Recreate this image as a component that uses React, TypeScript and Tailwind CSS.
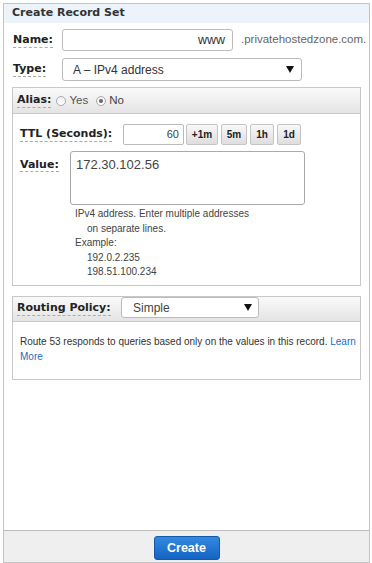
import React from "react";

const lbl = "font-['DejaVu_Sans',sans-serif] font-bold text-[11px] text-[#222] border-b border-dashed border-[#aaa] leading-[14px]";

function Arrow() {
  return (
    <svg width="8" height="7" viewBox="0 0 8 7" className="shrink-0">
      <path d="M0 0 H8 L4 7 Z" fill="#111" />
    </svg>
  );
}

function Radio({ checked }: { checked?: boolean }) {
  return (
    <span className="w-[10px] h-[10px] rounded-full border border-[#aaa] bg-gradient-to-b from-[#f0f0f0] to-white flex items-center justify-center shrink-0">
      {checked && <span className="w-[4px] h-[4px] rounded-full bg-[#666]" />}
    </span>
  );
}

function SmallBtn({ children, w }: { children: React.ReactNode; w: string }) {
  return (
    <div className={`${w} h-[21px] border border-[#c4c4c4] rounded-[2px] bg-gradient-to-b from-[#f8f8f8] to-[#dedede] flex items-center justify-center text-[10px] font-bold text-[#222]`}>
      {children}
    </div>
  );
}

export default function App() {
  return (
    <div className="bg-white pl-[3px] pr-[2px] pt-[3px] font-['Liberation_Sans',Arial,sans-serif]">
      <div className="w-[367px] h-[560px] border border-[#c4c4c4] flex flex-col">
        <div className="h-[19px] bg-[#edf3fb] pl-[8px] flex items-center font-['DejaVu_Sans',sans-serif] font-bold text-[11px] text-[#333]">
          Create Record Set
        </div>
        <div className="pl-[8px]">
          <div className="flex items-center mt-[6px] h-[22px]">
            <div className="w-[50px] pl-[1px] flex items-center leading-none"><span className={lbl}>Name:</span></div>
            <div className="w-[171px] h-[22px] border border-[#bbb] rounded-[3px] flex items-center justify-end pr-[7px] text-[12.5px] text-[#333]">www</div>
            <span className="ml-[8px] text-[11.5px] leading-none text-[#666]">.privatehostedzone.com.</span>
          </div>
          <div className="flex items-center mt-[7px] h-[23px]">
            <div className="w-[50px] pl-[1px] flex items-center leading-none"><span className={lbl}>Type:</span></div>
            <div className="w-[240px] h-[23px] border border-[#bbb] rounded-[3px] flex items-center pl-[10px] pr-[7px] text-[12px] text-[#333]">
              <span className="flex-1">A – IPv4 address</span>
              <Arrow />
            </div>
          </div>

          <div className="mt-[6px] w-[349px] border border-[#c8c8c8]">
            <div className="h-[26px] bg-gradient-to-b from-[#fafafa] to-[#e4e4e4] border-b border-[#c8c8c8] flex items-center pl-[4px] text-[11.5px] leading-none text-[#444]">
              <span className={lbl}>Alias:</span>
              <span className="ml-[5px]"><Radio /></span>
              <span className="ml-[3px] text-[#555]">Yes</span>
              <span className="ml-[8px]"><Radio checked /></span>
              <span className="ml-[3px]">No</span>
            </div>
            <div className="pl-[7px] pt-[10px] pb-[5px]">
              <div className="flex items-center h-[21px]">
                <div className="w-[103px] flex items-center leading-none"><span className={lbl}>TTL (Seconds):</span></div>
                <div className="w-[61px] h-[21px] border border-[#bbb] rounded-[2px] flex items-center justify-end pr-[4px] text-[11px] text-[#444]">60</div>
                <div className="flex gap-[3px] ml-[2px]">
                  <SmallBtn w="w-[32px]">+1m</SmallBtn>
                  <SmallBtn w="w-[26px]">5m</SmallBtn>
                  <SmallBtn w="w-[24px]">1h</SmallBtn>
                  <SmallBtn w="w-[24px]">1d</SmallBtn>
                </div>
              </div>
              <div className="flex mt-[6px]">
                <div className="w-[50px] pt-[4px] leading-none"><span className={lbl}>Value:</span></div>
                <div className="w-[235px] h-[54px] border border-[#aaa] rounded-[3px] pl-[5px] pt-[3px] text-[13px] text-[#444]">172.30.102.56</div>
              </div>
              <div className="pl-[55px] mt-[2px] text-[10px] leading-[14.6px] text-[#444]">
                <div>IPv4 address. Enter multiple addresses</div>
                <div className="pl-[12px]">on separate lines.</div>
                <div>Example:</div>
                <div className="pl-[12px]">192.0.2.235</div>
                <div className="pl-[12px]">198.51.100.234</div>
              </div>
            </div>
          </div>

          <div className="mt-[10px] w-[349px] border border-[#c8c8c8]">
            <div className="h-[25px] bg-gradient-to-b from-[#fafafa] to-[#e4e4e4] border-b border-[#c8c8c8] flex items-center pl-[4px]">
              <div className="w-[104px] flex items-center leading-none"><span className={lbl}>Routing Policy:</span></div>
              <div className="w-[138px] h-[21px] -mt-[2px] border border-[#bbb] rounded-[3px] bg-white flex items-center pl-[11px] pr-[6px] text-[12px] text-[#444]">
                <span className="flex-1">Simple</span>
                <Arrow />
              </div>
            </div>
            <div className="pl-[7px] pr-[4px] pt-[12px] pb-[15px] text-[10px] leading-[15px] text-[#333]">
              Route 53 responds to queries based only on the values in this record.{" "}
              <span className="text-[#1a6dc0]">Learn</span>{" "}
              <span className="text-[#1a6dc0]">More</span>
            </div>
          </div>
        </div>

        <div className="mt-auto h-[32px] border-t border-[#bcbcbc] bg-[#efefef] flex justify-center pt-[5px]">
          <div className="w-[66px] h-[24px] rounded-[3px] border border-[#1558a8] bg-gradient-to-b from-[#3489e0] to-[#1464c4] flex items-center justify-center text-white font-bold text-[12.5px]">
            Create
          </div>
        </div>
      </div>
    </div>
  );
}
